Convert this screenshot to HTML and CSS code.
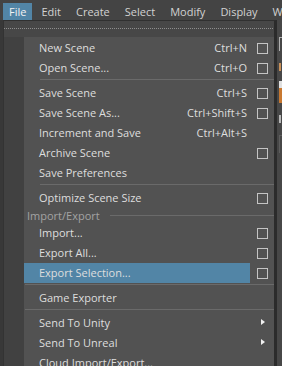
FILE: index.html
```html
<!DOCTYPE html>
<html lang="en">
<head>
  <meta charset="UTF-8" />
  <title>File Menu</title>
  <link rel="stylesheet" href="styles.css">
</head>
<body>
  <div class="menubar">
    <span class="menubar-item active">File</span>
    <span class="menubar-item">Edit</span>
    <span class="menubar-item">Create</span>
    <span class="menubar-item">Select</span>
    <span class="menubar-item">Modify</span>
    <span class="menubar-item">Display</span>
    <span class="menubar-item">Windows</span>
  </div>

  <div class="workspace">
    <div class="side-left"></div>

    <div class="menu">
      <div class="tear"><div class="tear-dots"></div></div>

      <div class="menu-list">
        <div class="item">
          <div class="main"><span class="name">New Scene</span><span class="key">Ctrl+N</span></div>
          <div class="opt"><span class="box"></span></div>
        </div>
        <div class="item">
          <div class="main"><span class="name">Open Scene...</span><span class="key">Ctrl+O</span></div>
          <div class="opt"><span class="box"></span></div>
        </div>
        <div class="sep"></div>
        <div class="item">
          <div class="main"><span class="name">Save Scene</span><span class="key">Ctrl+S</span></div>
          <div class="opt"><span class="box"></span></div>
        </div>
        <div class="item">
          <div class="main"><span class="name">Save Scene As...</span><span class="key">Ctrl+Shift+S</span></div>
          <div class="opt"><span class="box"></span></div>
        </div>
        <div class="item">
          <div class="main"><span class="name">Increment and Save</span><span class="key">Ctrl+Alt+S</span></div>
          <div class="opt"></div>
        </div>
        <div class="item">
          <div class="main"><span class="name">Archive Scene</span></div>
          <div class="opt"><span class="box"></span></div>
        </div>
        <div class="item">
          <div class="main"><span class="name">Save Preferences</span></div>
          <div class="opt"></div>
        </div>
        <div class="sep"></div>
        <div class="item">
          <div class="main"><span class="name">Optimize Scene Size</span></div>
          <div class="opt"><span class="box"></span></div>
        </div>

        <div class="group">
          <span class="group-name">Import/Export</span>
          <span class="group-line"></span>
        </div>

        <div class="item">
          <div class="main"><span class="name">Import...</span></div>
          <div class="opt"><span class="box"></span></div>
        </div>
        <div class="item">
          <div class="main"><span class="name">Export All...</span></div>
          <div class="opt"><span class="box"></span></div>
        </div>
        <div class="item">
          <div class="main selected"><span class="name">Export Selection...</span></div>
          <div class="opt"><span class="box"></span></div>
        </div>
        <div class="sep wide"></div>
        <div class="item">
          <div class="main"><span class="name">Game Exporter</span></div>
          <div class="opt"></div>
        </div>
        <div class="sep wide"></div>
        <div class="item">
          <div class="main"><span class="name">Send To Unity</span></div>
          <div class="opt"><span class="arrow"></span></div>
        </div>
        <div class="item">
          <div class="main"><span class="name">Send To Unreal</span></div>
          <div class="opt"><span class="arrow"></span></div>
        </div>
        <div class="item">
          <div class="main"><span class="name">Cloud Import/Export...</span></div>
          <div class="opt"></div>
        </div>
      </div>
    </div>

    <div class="side-right">
      <span class="peek-box"></span>
      <span class="peek-mark"></span>
      <span class="peek-icon"></span>
      <span class="peek-mark light"></span>
      <span class="peek-box tall"></span>
    </div>
  </div>
</body>
</html>
```

FILE: styles.css
```css
* {
  box-sizing: border-box;
}
body {
  margin: 0;
  width: 282px;
  height: 366px;
  overflow: hidden;
  background-color: #3b3b3b;
  color: #dedede;
  font-family: "Open Sans", "Noto Sans", sans-serif;
  font-size: 11px;
}
.menubar {
  display: flex;
  height: 20px;
  padding: 3px 0 0 3px;
  background-color: #444444;
  white-space: nowrap;
  overflow: hidden;
}
.menubar-item {
  flex-shrink: 0;
  height: 17px;
  padding: 0 6px;
  margin-right: 3px;
  line-height: 18px;
  color: #d2d2d2;
}
.menubar-item.active {
  background-color: #5285a6;
  color: #f2f2f2;
}
.workspace {
  display: flex;
  height: 346px;
}
.side-left {
  flex-shrink: 0;
  width: 3px;
  background-color: #383838;
}
.menu {
  width: 274px;
  flex-shrink: 0;
  border-top: 1px solid #303030;
  border-left: 1px solid #333333;
  border-right: 3px solid #2b2b2b;
  background-color: #525252;
  overflow: hidden;
}
.tear {
  height: 16px;
  padding-top: 7px;
  background-color: #474747;
}
.tear-dots {
  height: 1px;
  background: repeating-linear-gradient(90deg, #8e8e8e 0 1px, transparent 1px 2px);
}
.menu-list {
  border-left: 20px solid #414141;
  padding-top: 1px;
}
.item {
  display: flex;
  height: 20px;
}
.main {
  display: flex;
  width: 226px;
  padding: 0 3px 0 15px;
  line-height: 19px;
}
.main.selected {
  background-color: #5285a6;
}
.name {
  flex: 1;
  white-space: nowrap;
}
.key {
  white-space: nowrap;
}
.opt {
  display: flex;
  align-items: center;
  width: 24px;
  padding-left: 7px;
}
.box {
  width: 11px;
  height: 11px;
  border: 1px solid #c4c4c4;
}
.arrow {
  width: 0;
  height: 0;
  margin: -3px 0 0 4px;
  border-left: 4px solid #f0f0f0;
  border-top: 3.5px solid transparent;
  border-bottom: 3.5px solid transparent;
}
.sep {
  height: 1px;
  margin: 1px 0 3px 16px;
  background-color: #6a6a6a;
}
.sep.wide {
  margin-left: 1px;
}
.group {
  display: flex;
  align-items: center;
  height: 15px;
  padding-left: 3px;
  color: #a3a3a3;
  line-height: 15px;
}
.group-line {
  flex: 1;
  height: 1px;
  margin: 0 0 1px 10px;
  background-color: #6a6a6a;
}
.side-right {
  display: flex;
  flex-direction: column;
  flex: 1;
  min-width: 0;
  padding: 17px 0 0 2px;
  background-color: #474747;
}
.peek-box {
  height: 14px;
  border-top: 1px solid #b0b0b0;
  border-left: 1px solid #b0b0b0;
}
.peek-box.tall {
  height: 18px;
  margin-top: 12px;
  border-color: #5e5e5e;
}
.peek-mark {
  width: 2px;
  height: 8px;
  margin-top: 12px;
  background-color: #c89058;
}
.peek-mark.light {
  background-color: #b8b8b8;
}
.peek-icon {
  height: 22px;
  margin-top: 10px;
  background: linear-gradient(180deg, #e0e0e0 0 30%, #c87830 30% 100%);
}
```
